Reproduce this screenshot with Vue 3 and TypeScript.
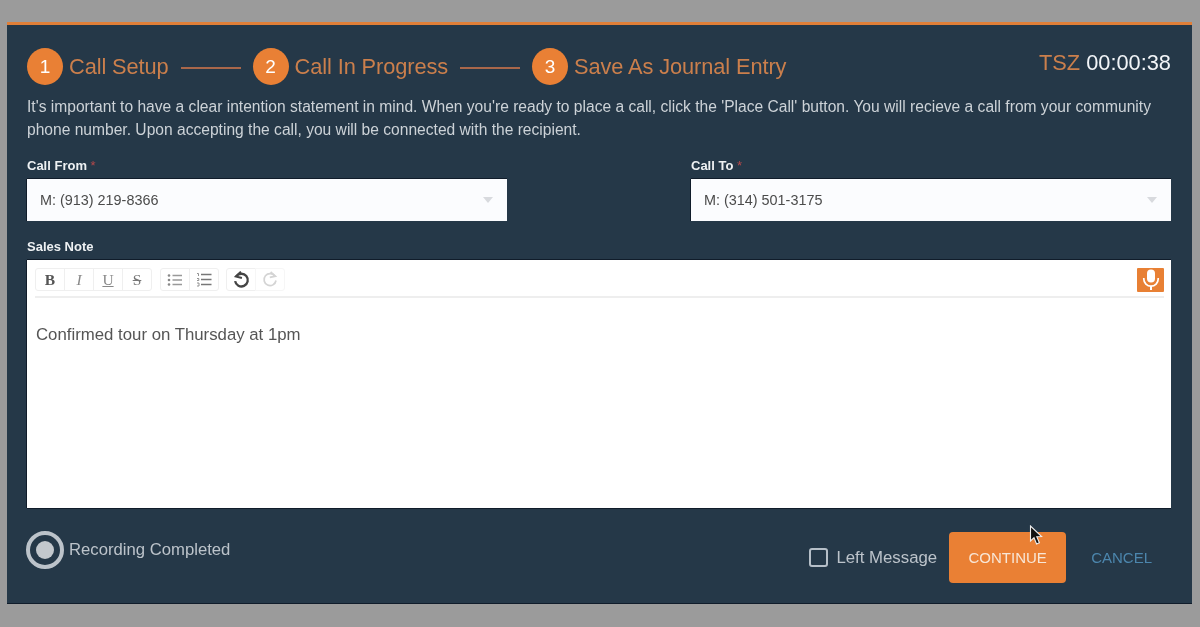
<script setup lang="ts">
const steps = [
  { n: 1, label: 'Call Setup' },
  { n: 2, label: 'Call In Progress' },
  { n: 3, label: 'Save As Journal Entry' },
]
const fields = [
  { label: 'Call From', value: 'M: (913) 219-8366' },
  { label: 'Call To', value: 'M: (314) 501-3175' },
]
</script>

<template>
  <div class="page">
    <section class="panel">
      <header class="top">
        <div class="steps">
          <template v-for="(s, i) in steps" :key="s.n">
            <span v-if="i > 0" class="rule"></span>
            <span class="num">{{ s.n }}</span>
            <span class="step-label">{{ s.label }}</span>
          </template>
        </div>
        <div class="timer"><span class="tsz">TSZ</span> 00:00:38</div>
      </header>

      <p class="intro">It's important to have a clear intention statement in mind. When you're ready to place a call, click the 'Place Call' button. You will recieve a call from your community phone number. Upon accepting the call, you will be connected with the recipient.</p>

      <div class="fields">
        <div v-for="f in fields" :key="f.label" class="field">
          <div class="lab">{{ f.label }} <span class="req">*</span></div>
          <div class="select">
            <span>{{ f.value }}</span>
            <span class="caret"></span>
          </div>
        </div>
      </div>

      <div class="lab note-lab">Sales Note</div>
      <div class="editor">
        <div class="toolbar">
          <div class="group">
            <span class="tb b">B</span>
            <span class="tb i">I</span>
            <span class="tb u">U</span>
            <span class="tb s">S</span>
          </div>
          <div class="group">
            <span class="tb">
              <svg width="16" height="14" viewBox="0 0 16 14" fill="none" stroke="#999" stroke-width="1.3">
                <path d="M5.5 2.5H15M5.5 7H15M5.5 11.5H15" />
                <circle cx="2" cy="2.5" r="1.3" fill="#888" stroke="none" />
                <circle cx="2" cy="7" r="1.3" fill="#888" stroke="none" />
                <circle cx="2" cy="11.5" r="1.3" fill="#888" stroke="none" />
              </svg>
            </span>
            <span class="tb">
              <svg width="16" height="15" viewBox="0 0 16 15" fill="none" stroke="#777" stroke-width="1.6">
                <path d="M5 2.5H15.5M5 7.5H15.5M5 12.5H15.5" />
                <path d="M1 1.5H2.5V4M1 6.5H2.8V8.5H1M1 11H3V14H1" stroke-width="0.9" stroke="#888" />
              </svg>
            </span>
          </div>
          <div class="group">
            <span class="tb">
              <svg width="17" height="18" viewBox="0 0 16 17" fill="none" stroke="#444" stroke-width="2.2">
                <path d="M3 5.2a6 6 0 1 1-1 4.3" />
                <path d="M7.4 0.6 L2.6 5.2 L8.4 6.6" fill="none" stroke-width="1.8" />
              </svg>
            </span>
            <span class="tb faint">
              <svg width="16" height="17" viewBox="0 0 16 17" fill="none" stroke="#d4d4d4" stroke-width="1.7">
                <path d="M13 5.2a6 6 0 1 0 1 4.3" />
                <path d="M8.6 1 L13.4 5.2 L7.8 6.4" />
              </svg>
            </span>
          </div>
          <span class="mic">
            <svg width="18" height="21" viewBox="0 0 18 21" fill="none">
              <rect x="5" y="0.5" width="8" height="13" rx="4" fill="#fff" />
              <path d="M1.8 9v1a7.2 7.2 0 0 0 14.4 0v-1" stroke="#fff" stroke-width="1.7" />
              <path d="M9 17v4" stroke="#fff" stroke-width="2" />
            </svg>
          </span>
        </div>
        <div class="body">Confirmed tour on Thursday at 1pm</div>
      </div>

      <footer class="foot">
        <div class="rec">
          <span class="rec-ring"><span class="rec-dot"></span></span>
          <span>Recording Completed</span>
        </div>
        <div class="actions">
          <span class="check"></span>
          <span class="left-msg">Left Message</span>
          <span class="continue">CONTINUE</span>
          <span class="cancel">CANCEL</span>
        </div>
      </footer>

      <svg class="cursor" width="16" height="22" viewBox="0 0 16 22">
        <path d="M1.5 1 L1.5 16 L5 12.8 L7.6 19 L10.4 17.8 L7.8 11.8 L12.6 11.6 Z" fill="#111" stroke="#eee" stroke-width="1.1" />
      </svg>
    </section>
  </div>
</template>

<style>
html, body { margin: 0; background: #9b9b9b; }
</style>

<style scoped>
.page {
  width: 1200px;
  height: 627px;
  box-sizing: border-box;
  padding: 22px 8px 23px 7px;
  background: #9b9b9b;
  font-family: "Liberation Sans", Arial, sans-serif;
  overflow: hidden;
}
.panel {
  position: relative;
  box-sizing: border-box;
  height: 582px;
  background: #253848;
  border-top: 3px solid #e07f38;
  border-bottom: 1px solid #101c2a;
  padding: 0 21px 0 20px;
  display: flex;
  flex-direction: column;
  filter: blur(0.45px);
}
.top {
  display: flex;
  justify-content: space-between;
  align-items: flex-start;
  height: 71px;
  padding-top: 23px;
  box-sizing: border-box;
}
.steps { display: flex; align-items: center; height: 37px; }
.num {
  width: 36px;
  height: 37px;
  border-radius: 50%;
  background: #e98035;
  color: #fff;
  font-size: 19px;
  display: flex;
  align-items: center;
  justify-content: center;
  margin-right: 6px;
}
.step-label { color: #cb7f4c; font-size: 21.8px; letter-spacing: -0.1px; }
.rule {
  width: 60px;
  height: 2px;
  background: #a9674a;
  margin: 2px 12px 0 12px;
}
.timer { color: #f2f5f8; font-size: 21.8px; line-height: 24px; margin-top: 3px; }
.tsz { color: #cb7f4c; }
.intro {
  margin: 0;
  color: #ccd2d7;
  font-size: 15.6px;
  line-height: 22.5px;
  height: 45px;
  width: 1135px;
}
.fields { display: flex; justify-content: space-between; margin-top: 17px; }
.field { width: 480px; }
.lab {
  color: #eef1f3;
  font-size: 13px;
  font-weight: 700;
  line-height: 16px;
  height: 16px;
}
.req { color: #b5484a; font-weight: 400; }
.select {
  margin-top: 5px;
  height: 42px;
  background: #fbfcfe;
  box-shadow: 0 -1px 0 #101c2a, -1px 0 0 #101c2a;
  display: flex;
  align-items: center;
  justify-content: space-between;
  padding: 0 14px 0 13px;
  color: #4b4b4b;
  font-size: 14.4px;
}
.caret {
  width: 0;
  height: 0;
  border-left: 5.5px solid transparent;
  border-right: 5.5px solid transparent;
  border-top: 6px solid #d8dade;
}
.note-lab { margin-top: 18px; }
.editor {
  margin-top: 5px;
  height: 248px;
  background: #fff;
  box-shadow: 0 -1px 0 #101c2a, -1px 0 0 #101c2a, 0 1px 0 #101c2a;
  display: flex;
  flex-direction: column;
}
.toolbar {
  margin: 0 7px 0 8px;
  height: 38px;
  box-sizing: border-box;
  border-bottom: 2px solid #eeeeee;
  display: flex;
  align-items: center;
  gap: 7.5px;
  padding-top: 3px;
}
.group { display: flex; }
.tb {
  box-sizing: border-box;
  width: 30px;
  height: 23px;
  border: 1px solid #efefef;
  margin-right: -1px;
  display: flex;
  align-items: center;
  justify-content: center;
  color: #666;
  font-size: 15.5px;
  font-family: "Liberation Serif", serif;
}
.group .tb:first-child { border-radius: 3px 0 0 3px; }
.group .tb:last-child { border-radius: 0 3px 3px 0; margin-right: 0; }
.b { font-weight: 700; color: #555; }
.i { font-style: italic; color: #888; }
.u { text-decoration: underline; color: #888; }
.s { text-decoration: line-through; color: #777; }
.faint { border-color: #f6f6f6; }
.mic {
  margin-left: auto;
  width: 27px;
  height: 24px;
  background: #e88034;
  border-radius: 1px;
  display: flex;
  align-items: center;
  justify-content: center;
}
.body {
  padding: 27px 0 0 9px;
  color: #555;
  font-size: 16.8px;
  line-height: 20px;
}
.foot {
  display: flex;
  justify-content: space-between;
  align-items: flex-start;
  padding-top: 24px;
}
.rec {
  display: flex;
  align-items: center;
  gap: 5px;
  color: #bcc3ca;
  font-size: 16.7px;
  margin: -1px 0 0 -1px;
}
.rec-ring {
  box-sizing: border-box;
  width: 38px;
  height: 38px;
  border: 4px solid #bcc3ca;
  border-radius: 50%;
  display: flex;
  align-items: center;
  justify-content: center;
}
.rec-dot { width: 18px; height: 18px; border-radius: 50%; background: #c3c8cd; }
.actions { display: flex; align-items: center; padding-right: 19px; }
.check {
  box-sizing: border-box;
  width: 19px;
  height: 19px;
  border: 2px solid #b6bfc8;
  border-radius: 3px;
  margin-right: 8px;
}
.left-msg { color: #bcc3ca; font-size: 16.8px; margin-right: 12px; }
.continue {
  width: 117px;
  height: 51px;
  background: #ea8034;
  border-radius: 4px;
  color: #f8e6d6;
  font-size: 15px;
  display: flex;
  align-items: center;
  justify-content: center;
  margin-right: 25px;
}
.cancel { color: #4c86ad; font-size: 15px; }
.cursor { position: absolute; left: 1022px; top: 500px; }
</style>
